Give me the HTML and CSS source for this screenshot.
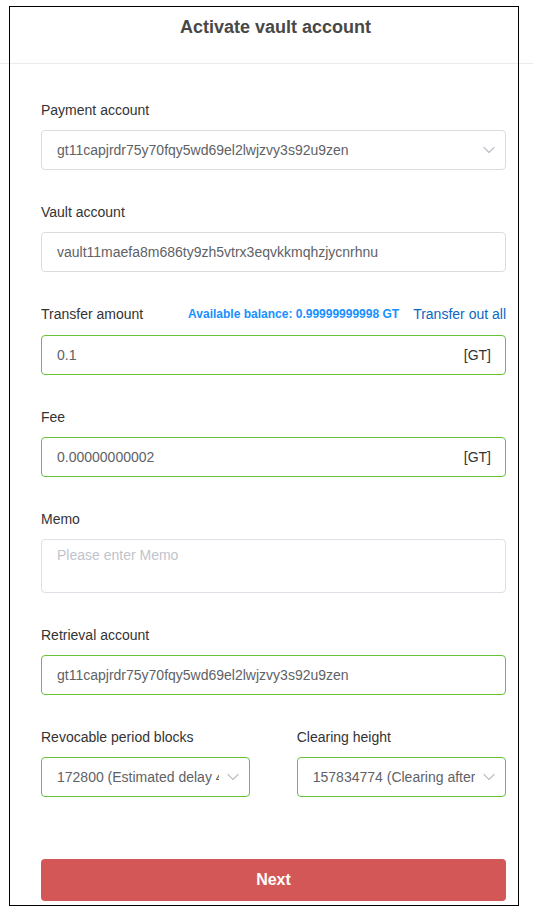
FILE: index.html
```html
<!DOCTYPE html>
<html lang="en">
<head>
<meta charset="utf-8">
<meta name="viewport" content="width=device-width, initial-scale=1">
<title>Activate vault account</title>
<link rel="stylesheet" href="styles.css">
</head>
<body>
<main class="dialog">
  <header class="dialog-header">
    <h1 class="dialog-title">Activate vault account</h1>
  </header>
  <form class="form">
    <div class="field">
      <label class="label" for="payment">Payment account</label>
      <div class="control">
        <select class="input select" id="payment"><option>gt11capjrdr75y70fqy5wd69el2lwjzvy3s92u9zen</option></select>
        <svg class="chevron" viewBox="0 0 14 14" aria-hidden="true"><path d="M2 4.5l5 5 5-5"/></svg>
      </div>
    </div>
    <div class="field">
      <label class="label" for="vault">Vault account</label>
      <input class="input" id="vault" type="text" value="vault11maefa8m686ty9zh5vtrx3eqvkkmqhzjycnrhnu">
    </div>
    <div class="field">
      <div class="label-row">
        <label class="label" for="amount">Transfer amount</label>
        <span class="balance">Available balance: 0.99999999998 GT</span>
        <a class="link" href="#amount">Transfer out all</a>
      </div>
      <div class="control">
        <input class="input valid" id="amount" type="text" value="0.1">
        <span class="unit">[GT]</span>
      </div>
    </div>
    <div class="field">
      <label class="label" for="fee">Fee</label>
      <div class="control">
        <input class="input valid" id="fee" type="text" value="0.00000000002">
        <span class="unit">[GT]</span>
      </div>
    </div>
    <div class="field">
      <label class="label" for="memo">Memo</label>
      <textarea class="input textarea" id="memo" rows="2" placeholder="Please enter Memo"></textarea>
    </div>
    <div class="field">
      <label class="label" for="retrieval">Retrieval account</label>
      <input class="input valid" id="retrieval" type="text" value="gt11capjrdr75y70fqy5wd69el2lwjzvy3s92u9zen">
    </div>
    <div class="columns">
      <div class="field">
        <label class="label" for="period">Revocable period blocks</label>
        <div class="control">
          <select class="input select valid" id="period"><option>172800 (Estimated delay 4</option></select>
          <svg class="chevron" viewBox="0 0 14 14" aria-hidden="true"><path d="M2 4.5l5 5 5-5"/></svg>
        </div>
      </div>
      <div class="field">
        <label class="label" for="height">Clearing height</label>
        <div class="control">
          <select class="input select valid" id="height"><option>157834774 (Clearing after</option></select>
          <svg class="chevron" viewBox="0 0 14 14" aria-hidden="true"><path d="M2 4.5l5 5 5-5"/></svg>
        </div>
      </div>
    </div>
    <button class="submit" type="button">Next</button>
  </form>
</main>
</body>
</html>
```
FILE: styles.css
```css
* {
  box-sizing: border-box;
}

body {
  margin: 0;
  background: #fff;
  color: #333;
  font: 14px/20px "Liberation Sans", Arial, sans-serif;
}

.dialog {
  position: relative;
}

/* Thin outline drawn over the header rule and the form */
.dialog::after {
  content: "";
  position: absolute;
  inset: 6px 14px 0 9px;
  border: 1px solid #000;
  pointer-events: none;
}

.dialog-header {
  padding: 15px 0 24px 18px;
  border-bottom: 1px solid #ebebeb;
}

.dialog-title {
  margin: 0;
  color: #484848;
  font-size: 18px;
  line-height: 24px;
  text-align: center;
}

.form {
  display: flex;
  flex-direction: column;
  gap: 22px;
  padding: 26px 27px 5px 41px;
}

.label {
  display: block;
  line-height: 40px;
}

.label-row {
  display: flex;
  align-items: center;
  gap: 14px;
  padding-bottom: 1px;
  line-height: 40px;
}

.balance {
  margin-left: auto;
  color: #1890ff;
  font-size: 12px;
  font-weight: bold;
}

.link {
  color: #0c66c6;
  text-decoration: none;
}

.control {
  display: grid;
  align-items: center;
}

.control > * {
  grid-area: 1 / 1;
}

.input {
  display: block;
  width: 100%;
  height: 40px;
  margin: 0;
  padding: 0 15px;
  border: 1px solid #dcdcdc;
  border-radius: 4px;
  outline: none;
  background: #fff;
  color: #606266;
  font: inherit;
}

.select {
  appearance: none;
  padding-right: 30px;
}

.valid {
  border-color: #67c23a;
}

.textarea {
  height: 54px;
  padding: 5px 15px;
  border-color: #dcdfe6;
  resize: none;
}

.textarea::placeholder {
  color: #c0c4cc;
}

.unit {
  justify-self: end;
  margin-right: 15px;
}

.chevron {
  justify-self: end;
  width: 14px;
  height: 14px;
  margin-right: 10px;
  fill: none;
  stroke: #c0c4cc;
  stroke-width: 1.3;
  stroke-linecap: round;
  stroke-linejoin: round;
  pointer-events: none;
}

.columns {
  display: flex;
  justify-content: space-between;
}

.columns .field {
  width: 45%;
}

.submit {
  height: 42px;
  margin-top: 40px;
  border: 0;
  border-radius: 4px;
  background: #d45757;
  color: #fff;
  font: bold 16px/20px "Liberation Sans", Arial, sans-serif;
}
```
